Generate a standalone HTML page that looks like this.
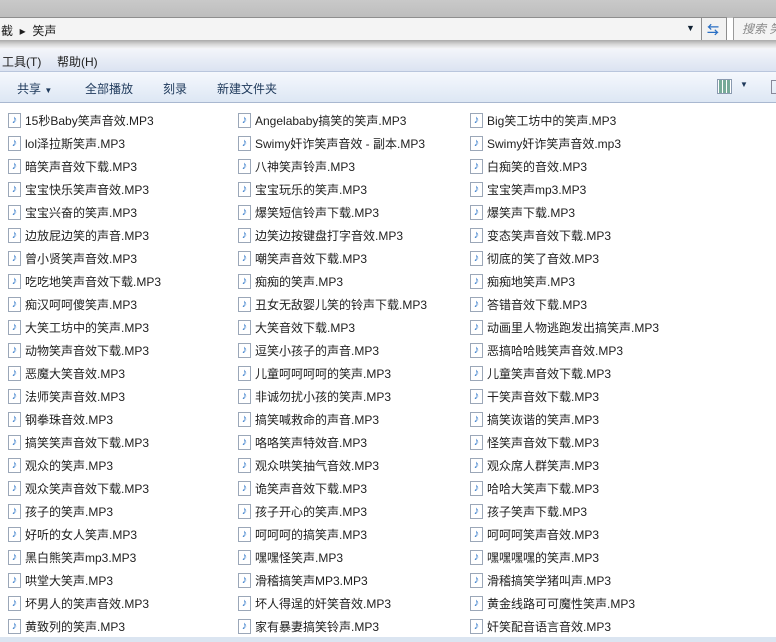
<!DOCTYPE html><html><head><meta charset="utf-8"><style>
body{margin:0;width:776px;height:642px;overflow:hidden;background:#fff;font-family:"Liberation Sans","Noto Sans CJK SC",sans-serif;font-size:12px;color:#1e1e1e;position:relative}
.top{position:absolute;left:0;top:0;width:776px;height:18px;background:linear-gradient(#c9c9c9,#bdbdbd)}
.addr{position:absolute;left:-2px;top:17px;width:703px;height:22px;border:1px solid #8e8e8e;background:#f4f4f4;border-radius:2px}
.ref{position:absolute;left:701px;top:17px;width:24px;height:22px;border:1px solid #8e8e8e;background:#f2f2f2}
.search{position:absolute;left:733px;top:17px;width:50px;height:22px;border:1px solid #9a9a9a;background:#f4f4f4;color:#888;font-style:italic;line-height:22px;padding-left:8px}
.sep{position:absolute;left:0;top:40px;width:776px;height:9px;background:linear-gradient(#aaa,#d8d8d8 50%,#f6f8fb)}
.menu{position:absolute;left:0;top:49px;width:776px;height:22px;background:linear-gradient(#f3f5fa,#dbe3f1);border-bottom:1px solid #b9c6dd}
.cmd{position:absolute;left:0;top:72px;width:776px;height:30px;background:linear-gradient(#f5f8fd,#dde7f4);border-bottom:1px solid #a9b8d0;color:#1e395b}
.cmd span,.menu span{position:absolute;white-space:nowrap}
.f{position:absolute;white-space:nowrap;height:16px;display:flex;align-items:center}
.f i{display:block;width:11px;height:13px;border:1px solid #9ba7b8;background:#fff;margin-right:4px;font-style:normal;font-size:11px;color:#2b74c7;line-height:13px;text-align:center;flex:none}
.bot{position:absolute;left:0;top:637px;width:776px;height:5px;background:#dbe5f1}
</style></head><body>
<div class="top"></div>
<div class="addr"><span style="position:absolute;left:2px;top:4px">截 &nbsp;▸ &nbsp;笑声</span><span style="position:absolute;left:687px;top:5px;font-size:9px;color:#123">▼</span></div>
<div class="ref"><span style="position:absolute;left:5px;top:3px;color:#2a6fc4;font-weight:bold">⇆</span></div>
<div class="search">搜索 笑</div>
<div class="sep"></div>
<div class="menu"><span style="left:2px;top:4px">工具(T)</span><span style="left:57px;top:4px">帮助(H)</span></div>
<div class="cmd"><span style="left:17px;top:8px">共享 <small style="font-size:8px">▼</small></span><span style="left:85px;top:8px">全部播放</span><span style="left:163px;top:8px">刻录</span><span style="left:217px;top:8px">新建文件夹</span>
<span style="left:717px;top:7px;width:13px;height:13px;border:1px solid #8a9ab0;background:repeating-linear-gradient(90deg,#fff 0 1px,#7a9 1px 4px)"></span><span style="left:740px;top:8px;font-size:8px">▼</span><span style="left:771px;top:8px;width:10px;height:12px;border:1px solid #889"></span></div>
<div id="c"></div>
<div class="bot"></div>
<script>
var d=[["15秒Baby笑声音效.MP3","Angelababy搞笑的笑声.MP3","Big笑工坊中的笑声.MP3"],["lol泽拉斯笑声.MP3","Swimy奸诈笑声音效 - 副本.MP3","Swimy奸诈笑声音效.mp3"],["暗笑声音效下载.MP3","八神笑声铃声.MP3","白痴笑的音效.MP3"],["宝宝快乐笑声音效.MP3","宝宝玩乐的笑声.MP3","宝宝笑声mp3.MP3"],["宝宝兴奋的笑声.MP3","爆笑短信铃声下载.MP3","爆笑声下载.MP3"],["边放屁边笑的声音.MP3","边笑边按键盘打字音效.MP3","变态笑声音效下载.MP3"],["曾小贤笑声音效.MP3","嘲笑声音效下载.MP3","彻底的笑了音效.MP3"],["吃吃地笑声音效下载.MP3","痴痴的笑声.MP3","痴痴地笑声.MP3"],["痴汉呵呵傻笑声.MP3","丑女无敌婴儿笑的铃声下载.MP3","答错音效下载.MP3"],["大笑工坊中的笑声.MP3","大笑音效下载.MP3","动画里人物逃跑发出搞笑声.MP3"],["动物笑声音效下载.MP3","逗笑小孩子的声音.MP3","恶搞哈哈贱笑声音效.MP3"],["恶魔大笑音效.MP3","儿童呵呵呵呵的笑声.MP3","儿童笑声音效下载.MP3"],["法师笑声音效.MP3","非诚勿扰小孩的笑声.MP3","干笑声音效下载.MP3"],["钢拳珠音效.MP3","搞笑喊救命的声音.MP3","搞笑诙谐的笑声.MP3"],["搞笑笑声音效下载.MP3","咯咯笑声特效音.MP3","怪笑声音效下载.MP3"],["观众的笑声.MP3","观众哄笑抽气音效.MP3","观众席人群笑声.MP3"],["观众笑声音效下载.MP3","诡笑声音效下载.MP3","哈哈大笑声下载.MP3"],["孩子的笑声.MP3","孩子开心的笑声.MP3","孩子笑声下载.MP3"],["好听的女人笑声.MP3","呵呵呵的搞笑声.MP3","呵呵呵笑声音效.MP3"],["黑白熊笑声mp3.MP3","嘿嘿怪笑声.MP3","嘿嘿嘿嘿的笑声.MP3"],["哄堂大笑声.MP3","滑稽搞笑声MP3.MP3","滑稽搞笑学猪叫声.MP3"],["坏男人的笑声音效.MP3","坏人得逞的奸笑音效.MP3","黄金线路可可魔性笑声.MP3"],["黄致列的笑声.MP3","家有暴妻搞笑铃声.MP3","奸笑配音语言音效.MP3"]];
var h="",xs=[8,238,470];
d.forEach(function(r,i){r.forEach(function(t,j){h+='<div class="f" style="left:'+xs[j]+'px;top:'+(112+i*23)+'px"><i>♪</i>'+t+'</div>'})});
document.getElementById("c").innerHTML=h;
</script>
</body></html>
